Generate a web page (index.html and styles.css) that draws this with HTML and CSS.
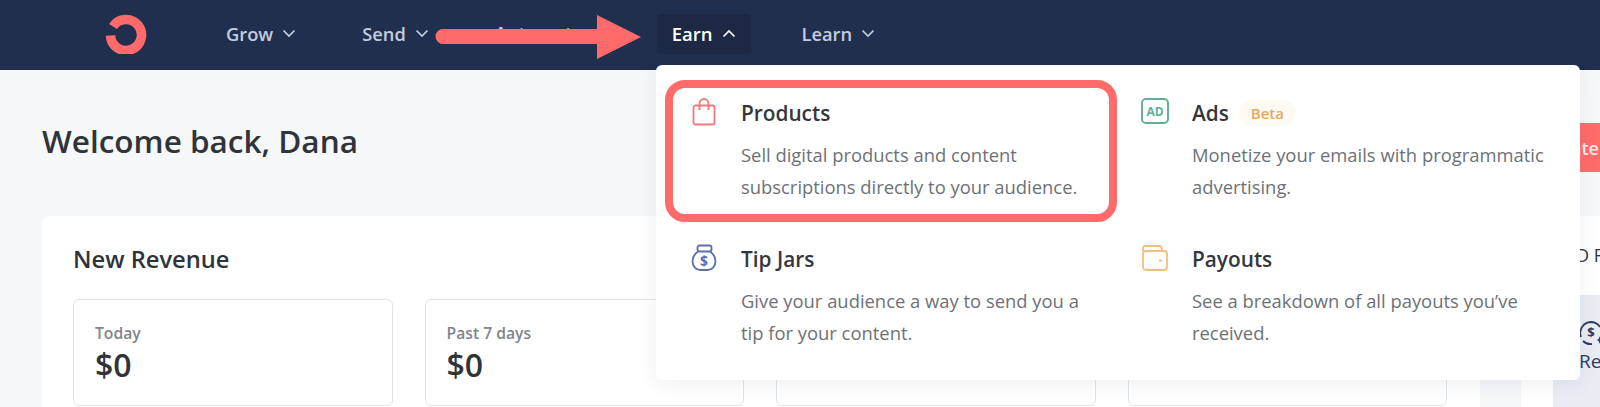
FILE: index.html
```html
<!DOCTYPE html>
<html lang="en">
<head>
<meta charset="utf-8">
<title>Dashboard</title>
<link rel="stylesheet" href="styles.css">
</head>
<body>
<header class="topbar">
  <svg class="logo" viewBox="0 0 42 40" width="42" height="40" aria-hidden="true">
    <path d="M8 12.500A15.500 15.500 0 1 1 5.500 21.500" fill="none" stroke="#ff6b6b" stroke-width="9.500"/>
  </svg>
  <nav class="nav">
    <a class="nav-item">Grow<svg class="chev" viewBox="0 0 14 9" width="14" height="9"><path d="M1.5 1.5 7 7l5.5-5.5"/></svg></a>
    <a class="nav-item">Send<svg class="chev" viewBox="0 0 14 9" width="14" height="9"><path d="M1.5 1.5 7 7l5.5-5.5"/></svg></a>
    <a class="nav-item nav-hidden">Automate<svg class="chev" viewBox="0 0 14 9" width="14" height="9"><path d="M1.5 1.5 7 7l5.5-5.5"/></svg></a>
    <a class="nav-item nav-active">Earn<svg class="chev" viewBox="0 0 14 9" width="14" height="9"><path d="M1.5 7.5 7 2l5.5 5.5"/></svg></a>
    <a class="nav-item">Learn<svg class="chev" viewBox="0 0 14 9" width="14" height="9"><path d="M1.5 1.5 7 7l5.5-5.5"/></svg></a>
  </nav>
</header>

<main class="page">
  <div class="page-head">
    <h1 class="welcome">Welcome back, Dana</h1>
    <button class="cta">Enter</button>
  </div>
  <div class="columns">
    <section class="revenue">
      <h2 class="revenue-title">New Revenue</h2>
      <div class="stats">
        <div class="stat"><div class="stat-label">Today</div><div class="stat-value">$0</div></div>
        <div class="stat"><div class="stat-label">Past 7 days</div><div class="stat-value">$0</div></div>
        <div class="stat"></div>
        <div class="stat"></div>
      </div>
    </section>
    <aside class="side">
      <div class="side-title">USD Revenue</div>
      <div class="side-panel">
        <svg class="side-icon" viewBox="0 0 24 26" width="24" height="26" aria-hidden="true">
          <path d="M2 17A11 11 0 0 1 12 2a11 11 0 0 1 9 5M4 21a11 11 0 0 0 9 3" fill="none" stroke="#2c3c63" stroke-width="1.8"/>
          <text x="12" y="17" text-anchor="middle" class="side-dollar">$</text>
          <path d="M21 16l1.500 3 1.500 1-1.500 1-1.500 3-1.500-3-1.500-1 1.500-1Z" fill="#2c3c63"/>
        </svg>
        <div class="side-label">Recurring</div>
      </div>
    </aside>
  </div>
</main>

<div class="menu">
  <a class="menu-item menu-item-on">
    <span class="menu-icon">
      <svg viewBox="0 0 26 28" width="26" height="28" aria-hidden="true">
        <rect x="2.500" y="7.500" width="21" height="19" rx="2" fill="none" stroke="#f0787e" stroke-width="1.8"/>
        <path d="M8.500 12V5.500a4.500 4.500 0 0 1 9 0V12" fill="none" stroke="#f0787e" stroke-width="1.8"/>
      </svg>
    </span>
    <div class="menu-text">
      <div class="menu-title">Products</div>
      <p class="menu-desc">Sell digital products and content subscriptions directly to your audience.</p>
    </div>
  </a>
  <a class="menu-item">
    <span class="menu-icon">
      <svg class="icon-wide" viewBox="0 0 28 28" width="28" height="28" aria-hidden="true">
        <rect x="1" y="1" width="26" height="24" rx="4" fill="none" stroke="#5fb096" stroke-width="1.9"/>
        <text x="14" y="17.500" text-anchor="middle" class="ad-text">AD</text>
      </svg>
    </span>
    <div class="menu-text">
      <div class="menu-title">Ads <span class="beta">Beta</span></div>
      <p class="menu-desc">Monetize your emails with programmatic advertising.</p>
    </div>
  </a>
  <a class="menu-item">
    <span class="menu-icon">
      <svg viewBox="0 0 26 28" width="26" height="28" aria-hidden="true">
        <rect x="6.500" y="1.500" width="14" height="6" rx="2" fill="none" stroke="#5b70a8" stroke-width="1.8"/>
        <path d="M7 7.500C3.500 10 1.500 12.500 1.500 17c0 5.500 3.500 9 8 9h7c4.500 0 8-3.500 8-9 0-4.500-2-7-5.500-9.500" fill="none" stroke="#5b70a8" stroke-width="1.8"/>
        <text x="13" y="21.500" text-anchor="middle" class="jar-text">$</text>
      </svg>
    </span>
    <div class="menu-text">
      <div class="menu-title">Tip Jars</div>
      <p class="menu-desc">Give your audience a way to send you a tip for your content.</p>
    </div>
  </a>
  <a class="menu-item">
    <span class="menu-icon">
      <svg class="icon-wide" viewBox="0 0 28 28" width="28" height="28" aria-hidden="true">
        <path d="M2 7V4a2 2 0 0 1 2-2h14a3 3 0 0 1 3 3v2" fill="none" stroke="#f1bf7e" stroke-width="1.8"/>
        <rect x="2" y="7" width="24" height="19" rx="3" fill="none" stroke="#f1bf7e" stroke-width="1.8"/>
        <path d="M18 16.500h3" fill="none" stroke="#f1bf7e" stroke-width="1.800"/>
      </svg>
    </span>
    <div class="menu-text">
      <div class="menu-title">Payouts</div>
      <p class="menu-desc">See a breakdown of all payouts you’ve received.</p>
    </div>
  </a>
</div>

<svg class="arrow" viewBox="0 0 206 44" width="206" height="44" aria-hidden="true">
  <path d="M8 14H162V0L206 22 162 44V29H8a7.500 7.500 0 0 1 0-15Z" fill="#ff6b6b"/>
</svg>
</body>
</html>
```
FILE: styles.css
```css
* { box-sizing: border-box; }

html, body {
  margin: 0;
  height: 407px;
  overflow: hidden;
}

body {
  position: relative;
  background: #f6f7f9;
  font-family: "Open Sans", "Liberation Sans", sans-serif;
  color: #2f343b;
}

.topbar {
  display: flex;
  align-items: center;
  height: 70px;
  padding-left: 105px;
  background: #212f4f;
}

.logo { margin-right: 64px; margin-top: -3px; }

.nav { display: flex; align-items: center; gap: 36px; }

.nav-item {
  display: flex;
  align-items: center;
  gap: 9px;
  height: 40px;
  margin-top: -3px;
  padding: 0 15px;
  border-radius: 4px;
  font-size: 18.3px;
  font-weight: 600;
  color: #c3cddd;
}

.nav-hidden { padding-bottom: 2px; }

.nav-active {
  background: #1c2844;
  color: #fff;
  font-size: 18.5px;
}

.chev {
  fill: none;
  stroke: currentColor;
  stroke-width: 1.7;
}

.page { padding-left: 42px; }

.page-head {
  display: flex;
  justify-content: space-between;
  align-items: flex-start;
  margin-top: 53px;
  height: 49px;
  margin-bottom: 44px;
}

.welcome {
  margin: 0;
  font-size: 31.5px;
  line-height: 36px;
  font-weight: 600;
}

.cta {
  width: 80px;
  height: 49px;
  padding: 0 0 0 40px;
  border: 0;
  border-radius: 4px 0 0 4px;
  background: #ff6b6b;
  color: #ffe9e9;
  font: 600 18px "Open Sans", sans-serif;
  text-align: left;
  white-space: nowrap;
  overflow: hidden;
}

.columns { display: flex; gap: 41px; }

.revenue {
  flex: 0 0 1438px;
  height: 260px;
  padding: 26px 33px 0 31px;
  border-radius: 8px;
  background: #fff;
}

.revenue-title {
  margin: 0 0 23px;
  font-size: 23.7px;
  line-height: 34px;
  font-weight: 600;
}

.stats {
  display: grid;
  grid-template-columns: repeat(4, 1fr);
  gap: 32px;
}

.stat {
  height: 107px;
  padding: 22px 21px 0;
  border: 1px solid #e2e4e8;
  border-radius: 6px;
}

.stat-label {
  font-size: 15.7px;
  line-height: 22px;
  font-weight: 600;
  color: #80858b;
}

.stat-value {
  margin-top: 1px;
  font-size: 32px;
  line-height: 40px;
  font-weight: 600;
  color: #2f343b;
}

.side {
  flex: 0 0 300px;
  background: #fff;
}

.side-title {
  height: 79px;
  padding: 26px 0 0 32px;
  font-size: 18px;
  line-height: 26px;
  white-space: nowrap;
}

.side-panel {
  margin-left: 32px;
  height: 130px;
  padding: 25px 0 0 26px;
  background: #e9ecf3;
  color: #2c3c63;
}

.side-icon { display: block; margin-bottom: 2px; }

.side-dollar { font: 700 13px "Open Sans", sans-serif; fill: #2c3c63; }

.side-label { font-size: 19px; line-height: 26px; white-space: nowrap; }

.menu {
  position: absolute;
  left: 656px;
  top: 65px;
  width: 924px;
  height: 315px;
  padding: 15px 0 0 9px;
  display: grid;
  grid-template-columns: 451px 452px;
  grid-auto-rows: 142px;
  row-gap: 4px;
  border-radius: 6px;
  background: #fff;
  box-shadow: 0 4px 20px rgba(30, 40, 70, 0.07);
}

.menu-item {
  display: flex;
  padding: 11px 8px 0 18px;
  border: 8px solid transparent;
  border-radius: 20px;
}

.menu-item-on { border-color: #ff6b6b; margin-right: -1px; }

.menu-icon { flex: 0 0 50px; margin-top: -1px; }

.menu-icon svg { display: block; }

.icon-wide { margin-left: -1px; }

.menu-text { flex: 0 0 358px; }

.menu-title {
  display: flex;
  align-items: center;
  gap: 10px;
  font-size: 20.8px;
  line-height: 28px;
  font-weight: 600;
  color: #33373d;
}

.beta {
  padding: 0 12px;
  height: 26px;
  border-radius: 13px;
  background: #fdfaf3;
  color: #e2aa5c;
  font-size: 15px;
  line-height: 26px;
  font-weight: 600;
}

.menu-desc {
  margin: 12px 0 0;
  font-size: 18.4px;
  line-height: 32px;
  color: #6d7177;
}

.ad-text { font: 700 12px "Open Sans", sans-serif; fill: #5fb096; }
.jar-text { font: 700 14px "Open Sans", sans-serif; fill: #5b70a8; }

.arrow {
  position: absolute;
  left: 435px;
  top: 15px;
}
```
